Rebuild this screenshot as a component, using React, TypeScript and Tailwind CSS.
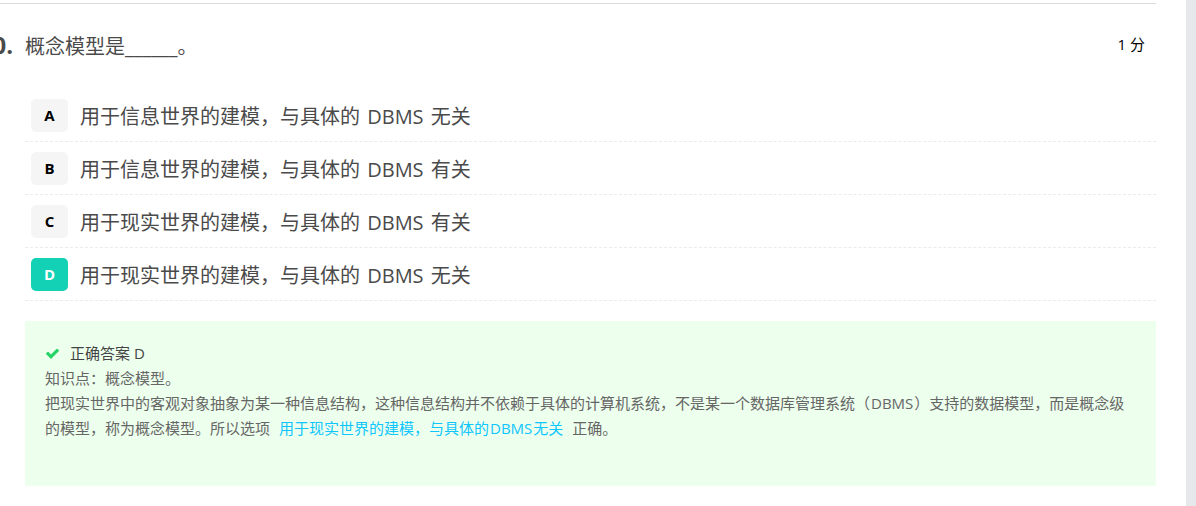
import { useState } from "react";

const options = [
  { key: "A", before: "用于信息世界的建模，与具体的", after: "无关" },
  { key: "B", before: "用于信息世界的建模，与具体的", after: "有关" },
  { key: "C", before: "用于现实世界的建模，与具体的", after: "有关" },
  { key: "D", before: "用于现实世界的建模，与具体的", after: "无关" },
];

function CheckIcon() {
  return (
    <svg viewBox="0 0 1792 1792" className="size-[15px] shrink-0 fill-[#25d366]" aria-hidden="true">
      <path d="M1671 566q0 40-28 68l-724 724-136 136q-28 28-68 28t-68-28l-136-136-362-362q-28-28-28-68t28-68l136-136q28-28 68-28t68 28l294 295 656-657q28-28 68-28t68 28l136 136q28 28 28 68z" />
    </svg>
  );
}

function Option({
  label,
  before,
  after,
  selected,
  onSelect,
}: {
  label: string;
  before: string;
  after: string;
  selected: boolean;
  onSelect: () => void;
}) {
  return (
    <li className="border-b border-dashed border-[#ebebeb]">
      <button
        type="button"
        aria-pressed={selected}
        onClick={onSelect}
        className="flex w-full items-center gap-3 pt-[10px] pr-[6px] pb-[9px] pl-[6px] text-left"
      >
        <span
          className={
            selected
              ? "flex h-[33px] w-[37px] shrink-0 items-center justify-center rounded-[5px] bg-[#12d1b4] text-[15px] font-bold text-white"
              : "flex h-[33px] w-[37px] shrink-0 items-center justify-center rounded-[5px] bg-[#f5f5f5] text-[15px] font-bold text-black"
          }
        >
          {label}
        </span>
        <span className="pt-[2px] text-[20px] leading-[30px] text-[#4a4a4a]">
          {before} <span className="mx-[2px]">DBMS</span> {after}
        </span>
      </button>
    </li>
  );
}

export default function App() {
  const [selected, setSelected] = useState("D");

  return (
    <div className="flex min-h-screen bg-[#e6e8ec] pr-[10px] font-['Open_Sans','Noto_Sans_CJK_SC',sans-serif]">
      <main className="min-w-0 grow bg-white pt-[3px] pr-[30px] pb-5">
        <header className="flex items-start border-t border-[#dcdcdc] pt-[26px] pr-[11px]">
          <div className="flex w-[25px] shrink-0 justify-end overflow-hidden pr-3 text-[24px] leading-[30px] font-bold text-[#4a4a4a]">
            0.
          </div>
          <h1 className="grow text-[20px] leading-[34px] text-[#4a4a4a]">概念模型是______。</h1>
          <span className="text-[15px] leading-[28px] text-black">1 分</span>
        </header>

        <ul className="mt-[25px] ml-[25px]">
          {options.map((o) => (
            <Option
              key={o.key}
              label={o.key}
              before={o.before}
              after={o.after}
              selected={selected === o.key}
              onSelect={() => setSelected(o.key)}
            />
          ))}
        </ul>

        <section className="mt-5 ml-[25px] bg-[#edffed] px-5 pt-5 pb-[45px] text-[15px] leading-[25px] text-[#666]">
          <h2 className="flex items-center gap-[10px] text-[#444]">
            <CheckIcon />
            正确答案 D
          </h2>
          <p>知识点：概念模型。</p>
          <p>
            把现实世界中的客观对象抽象为某一种信息结构，这种信息结构并不依赖于具体的计算机系统，不是某一个数据库管理系统（<span className="mx-px">DBMS</span>）支持的数据模型，而是概念级的模型，称为概念模型。所以选项
            <a href="#answer" className="mx-[9px] text-[#0fc6ff]">
              用于现实世界的建模，与具体的<span className="mx-px">DBMS</span>无关
            </a>
            正确。
          </p>
        </section>
      </main>
    </div>
  );
}
